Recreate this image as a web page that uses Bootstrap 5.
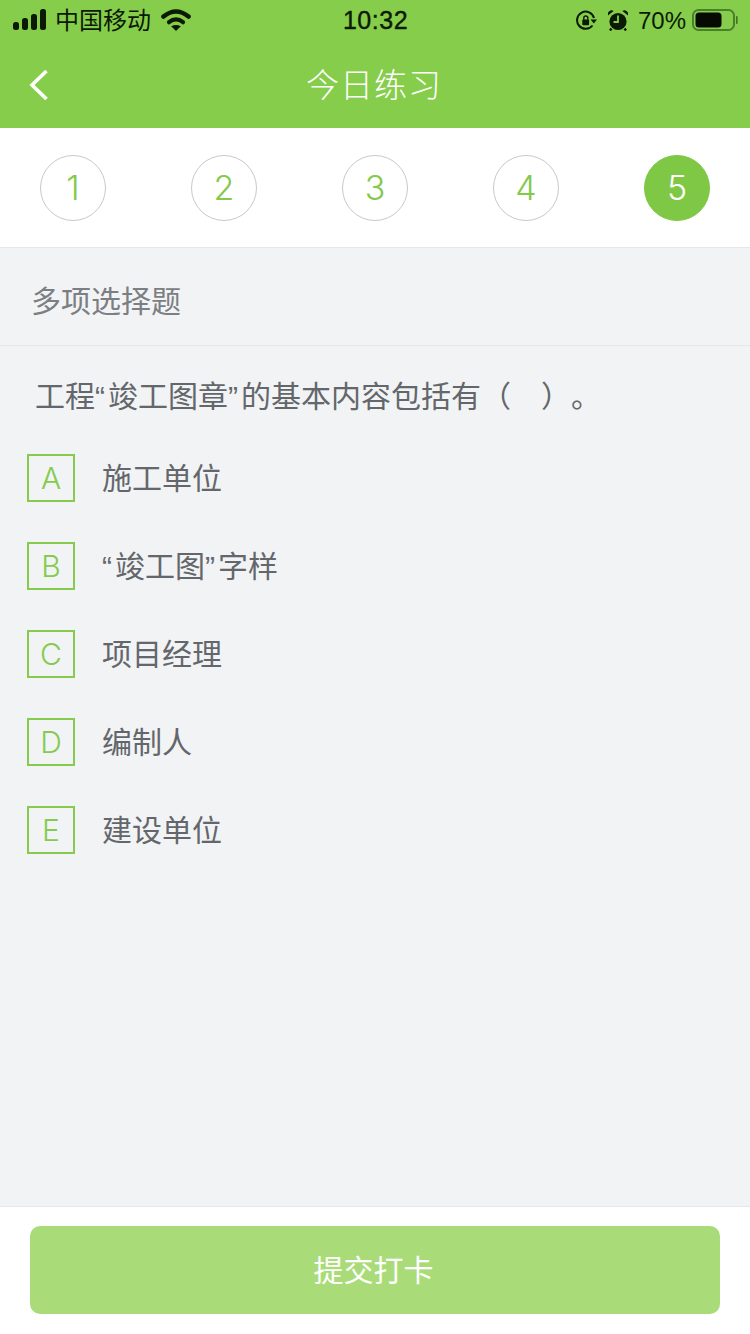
<!DOCTYPE html>
<html lang="zh-CN">
<head>
<meta charset="utf-8">
<title>今日练习</title>
<link href="https://cdn.jsdelivr.net/npm/bootstrap@5.3.0/dist/css/bootstrap.min.css" rel="stylesheet">
<style>
html,body{height:1334px;overflow:hidden}
body{background:#f2f3f5;font-family:"Liberation Sans","Noto Sans CJK SC",sans-serif;color:#666a6e}
.shell{height:1334px}
.head-area{background:#86cd4b;height:128px}
.status-row{height:42px;color:#0c1a05;font-size:25px;padding:0 12px 0 13px}
.status-side{width:300px}
.clock{font-size:25px;font-weight:400;-webkit-text-stroke:.4px #0c1a05;letter-spacing:.5px}
.carrier{font-size:24px;margin-left:9px;margin-right:10px;line-height:1}
.pct{font-size:24px;margin:0 6px 0 10px;line-height:1}
.lift-one{margin-top:-3px}
.lift-two{margin-top:-2px}
.alarm-icon{margin-left:11px}
.title-row{height:86px;position:relative;padding-right:2px}
.back-link{position:absolute;left:28px;top:26px;display:block;line-height:0}
.page-title{font-size:33px;color:#fff;margin:0;font-weight:300;letter-spacing:1px;line-height:1}
.step-row{background:#fff;height:120px;padding:0 40px;border-bottom:1px solid #e6e7e9}
.step-dot{width:66px;height:66px;border:1px solid #c9c9c9;border-radius:50%;color:#83c94c;font-family:Inter,"Liberation Sans",sans-serif;font-weight:300;font-size:34px;line-height:1;background:#fff}
.step-dot.on{background:#7fc846;border-color:#7fc846;color:#fff}
.kind-row{height:98px;padding:11px 0 0 31px;font-size:30px;color:#7b7e82;border-bottom:1px solid #e6e7e9;line-height:1}
.ask{font-size:30px;color:#63676b;height:108px;line-height:1;margin:0;padding:36px 0 0 35px;text-spacing-trim:space-all}
.qt{letter-spacing:3px}
.opt-row{height:88px;padding-left:27px}
.opt-box{width:48px;height:48px;border:2px solid #84cb4e;color:#84cb4e;font-family:Inter,"Liberation Sans",sans-serif;font-weight:300;font-size:30px;line-height:1;flex:none}
.opt-text{margin-left:27px;padding-top:10px;font-size:30px;color:#63676b;line-height:1}
.foot{background:#fff;height:128px;border-top:1px solid #e6e7e9;padding:19px 30px 20px}
.send-btn{display:block;width:100%;height:88px;background:#a9dc78;border:0;border-radius:10px;color:#fff;font-size:30px;line-height:1;padding:2px 3px 0 0}
.send-btn:hover,.send-btn:disabled{background:#a9dc78;color:#fff;opacity:1}
</style>
</head>
<body>
<div class="shell d-flex flex-column">
  <header class="head-area">
    <div class="status-row d-flex align-items-center justify-content-between">
      <div class="status-side d-flex align-items-center">
        <svg class="lift-one" width="33" height="21" viewBox="0 0 33 21" fill="#0c1a05"><rect x="0" y="13" width="6" height="8" rx="2.5"/><rect x="9" y="9" width="6" height="12" rx="2.5"/><rect x="18" y="5" width="6" height="16" rx="2.5"/><rect x="27" y="0" width="6" height="21" rx="2.5"/></svg>
        <span class="carrier">中国移动</span>
        <svg class="lift-two" width="30" height="22" viewBox="0 0 30 22" fill="none" stroke="#0c1a05"><path d="M2.5 7.5Q15-2.5 27.5 7.5" stroke-width="4.6" stroke-linecap="round"/><path d="M8 13.2Q15 7.5 22 13.2" stroke-width="4.2" stroke-linecap="round"/><path d="M10.2 17.2Q15 14.8 19.8 17.2L15 22z" fill="#0c1a05" stroke="none"/></svg>
      </div>
      <div class="clock">10:32</div>
      <div class="status-side d-flex align-items-center justify-content-end">
        <svg width="22" height="22" viewBox="0 0 22 22" fill="none" stroke="#0c1a05" stroke-width="2"><path d="M17.5 15.5A8.6 8.6 0 1 1 19 8"/><path d="M15.5 9.5h6.5l-3.2 4z" fill="#0c1a05" stroke="none"/><rect x="7.3" y="9.5" width="6.8" height="5.8" rx="1" fill="#0c1a05" stroke="none"/><path d="M8.8 10V8a2 2 0 0 1 4 0v2" stroke-width="1.4"/></svg>
        <svg class="alarm-icon lift-two" width="20" height="21" viewBox="0 0 20 21"><path d="M3.5 18.5l-1.5 2M16.5 18.5l1.5 2" stroke="#0c1a05" stroke-width="2.4"/><circle cx="10" cy="11.5" r="8.6" fill="#0c1a05"/><path d="M0 5.4a3.8 3.8 0 0 1 5.6-4.4zM20 5.4a3.8 3.8 0 0 0-5.6-4.4z" fill="#0c1a05"/><path d="M10 5.5V12H5.5" fill="none" stroke="#86cd4b" stroke-width="1.8"/></svg>
        <span class="pct">70%</span>
        <svg class="lift-two" width="46" height="22" viewBox="0 0 46 22"><rect x="1" y="1" width="41" height="20" rx="5.5" fill="none" stroke="#4a7f2c" stroke-width="2"/><rect x="3.5" y="3.5" width="26" height="15" rx="3.5" fill="#050a02"/><rect x="44" y="7" width="1.6" height="8" rx=".8" fill="#3f7024"/></svg>
      </div>
    </div>
    <div class="title-row d-flex align-items-center justify-content-center">
      <a class="back-link" href="#" aria-label="返回"><svg width="22" height="34" viewBox="0 0 22 34" fill="none" stroke="#fff" stroke-width="3.6"><path d="M18.5 3L4 17l14.5 14"/></svg></a>
      <h1 class="page-title">今日练习</h1>
    </div>
  </header>

  <nav class="step-row d-flex align-items-center justify-content-between">
    <div class="step-dot d-flex align-items-center justify-content-center">1</div>
    <div class="step-dot d-flex align-items-center justify-content-center">2</div>
    <div class="step-dot d-flex align-items-center justify-content-center">3</div>
    <div class="step-dot d-flex align-items-center justify-content-center">4</div>
    <div class="step-dot on d-flex align-items-center justify-content-center">5</div>
  </nav>

  <main class="flex-grow-1">
    <div class="kind-row d-flex align-items-center">多项选择题</div>
    <p class="ask">工程<span class="qt">“</span>竣工图章<span class="qt">”</span>的基本内容包括有（&emsp;）。</p>
    <div class="opt-row d-flex align-items-start">
      <div class="opt-box d-flex align-items-center justify-content-center">A</div><div class="opt-text">施工单位</div>
    </div>
    <div class="opt-row d-flex align-items-start">
      <div class="opt-box d-flex align-items-center justify-content-center">B</div><div class="opt-text"><span class="qt">“</span>竣工图<span class="qt">”</span>字样</div>
    </div>
    <div class="opt-row d-flex align-items-start">
      <div class="opt-box d-flex align-items-center justify-content-center">C</div><div class="opt-text">项目经理</div>
    </div>
    <div class="opt-row d-flex align-items-start">
      <div class="opt-box d-flex align-items-center justify-content-center">D</div><div class="opt-text">编制人</div>
    </div>
    <div class="opt-row d-flex align-items-start">
      <div class="opt-box d-flex align-items-center justify-content-center">E</div><div class="opt-text">建设单位</div>
    </div>
  </main>

  <footer class="foot">
    <button class="btn send-btn" type="button">提交打卡</button>
  </footer>
</div>
<script src="https://cdn.jsdelivr.net/npm/bootstrap@5.3.0/dist/js/bootstrap.bundle.min.js"></script>
</body>
</html>
